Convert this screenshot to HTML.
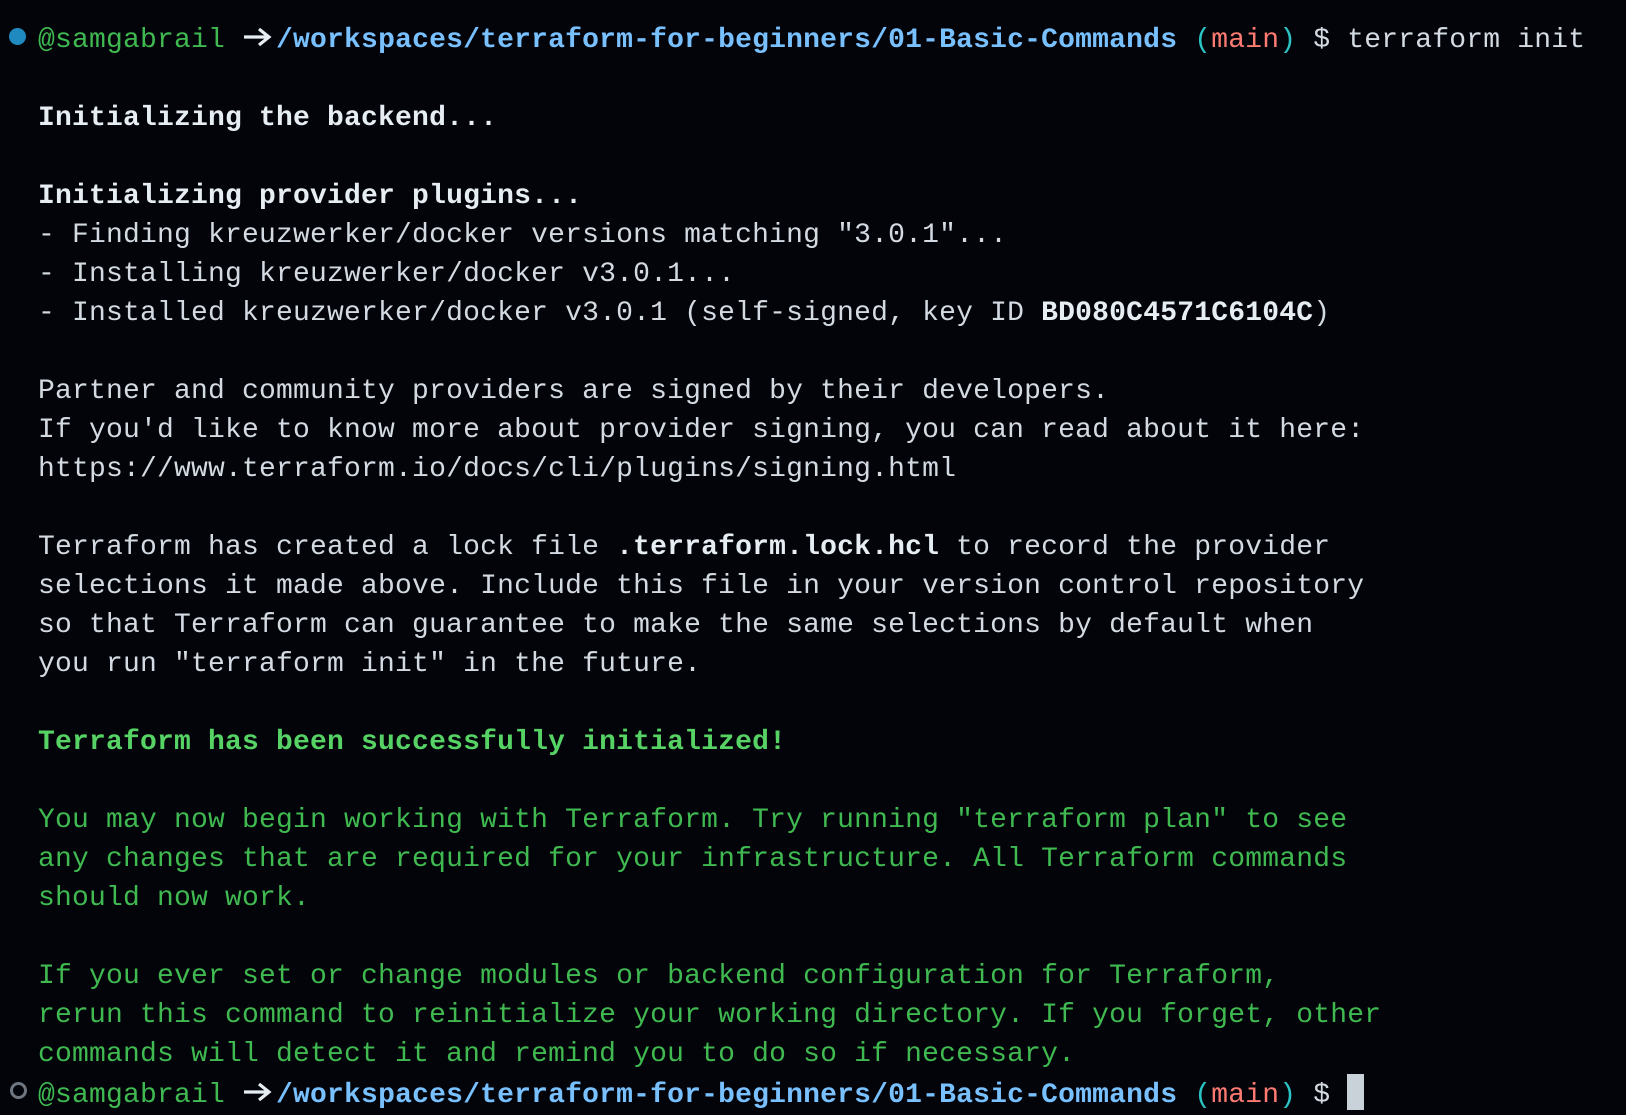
<!DOCTYPE html>
<html><head><meta charset="utf-8"><style>
html,body{margin:0;padding:0;background:#02040a;width:1626px;height:1114px;overflow:hidden}
.t{position:absolute;left:38px;top:21px;font-family:"Liberation Mono","DejaVu Sans Mono",monospace;font-size:28px;line-height:39px;letter-spacing:0.2px;color:#d4dae2;white-space:pre}
b{font-weight:bold}
.u{color:#3fb950}.p{color:#79c0ff;font-weight:bold}.par{color:#2bc4c4}.br{color:#ff7b72}
.g{color:#3fb950}.gb{color:#56d364;font-weight:bold}.w{color:#e6edf3}
.dot{position:absolute;left:9px;top:28px;width:17px;height:17px;border-radius:50%;background:#1f8ac0}
.dot2{position:absolute;left:10px;top:1082px;width:11px;height:11px;border-radius:50%;border:3px solid #6e7681}
.cur{display:inline-block;width:17px;height:36px;background:#c9d1d9;vertical-align:-8px}
.ar{display:inline-block;width:34px;height:20px;vertical-align:0px}
</style></head><body>
<div class="dot"></div><div class="dot2"></div>
<div class="t"><span class="u">@samgabrail</span> <svg class="ar" viewBox="0 0 34 20"><path d="M2 10H26M17 2L27 10L17 18" stroke="#e6edf3" stroke-width="3.2" fill="none"/></svg><span class="p">/workspaces/terraform-for-beginners/01-Basic-Commands</span> <span class="par">(</span><span class="br">main</span><span class="par">)</span> $ terraform init

<b class="w">Initializing the backend...</b>

<b class="w">Initializing provider plugins...</b>
- Finding kreuzwerker/docker versions matching "3.0.1"...
- Installing kreuzwerker/docker v3.0.1...
- Installed kreuzwerker/docker v3.0.1 (self-signed, key ID <b class="w">BD080C4571C6104C</b>)

Partner and community providers are signed by their developers.
If you'd like to know more about provider signing, you can read about it here:
https://www.terraform.io/docs/cli/plugins/signing.html

Terraform has created a lock file <b class="w">.terraform.lock.hcl</b> to record the provider
selections it made above. Include this file in your version control repository
so that Terraform can guarantee to make the same selections by default when
you run "terraform init" in the future.

<span class="gb">Terraform has been successfully initialized!</span>

<span class="g">You may now begin working with Terraform. Try running "terraform plan" to see
any changes that are required for your infrastructure. All Terraform commands
should now work.

If you ever set or change modules or backend configuration for Terraform,
rerun this command to reinitialize your working directory. If you forget, other
commands will detect it and remind you to do so if necessary.</span>
<span class="u">@samgabrail</span> <svg class="ar" viewBox="0 0 34 20"><path d="M2 10H26M17 2L27 10L17 18" stroke="#e6edf3" stroke-width="3.2" fill="none"/></svg><span class="p">/workspaces/terraform-for-beginners/01-Basic-Commands</span> <span class="par">(</span><span class="br">main</span><span class="par">)</span> $ <span class="cur"></span></div>
</body></html>
